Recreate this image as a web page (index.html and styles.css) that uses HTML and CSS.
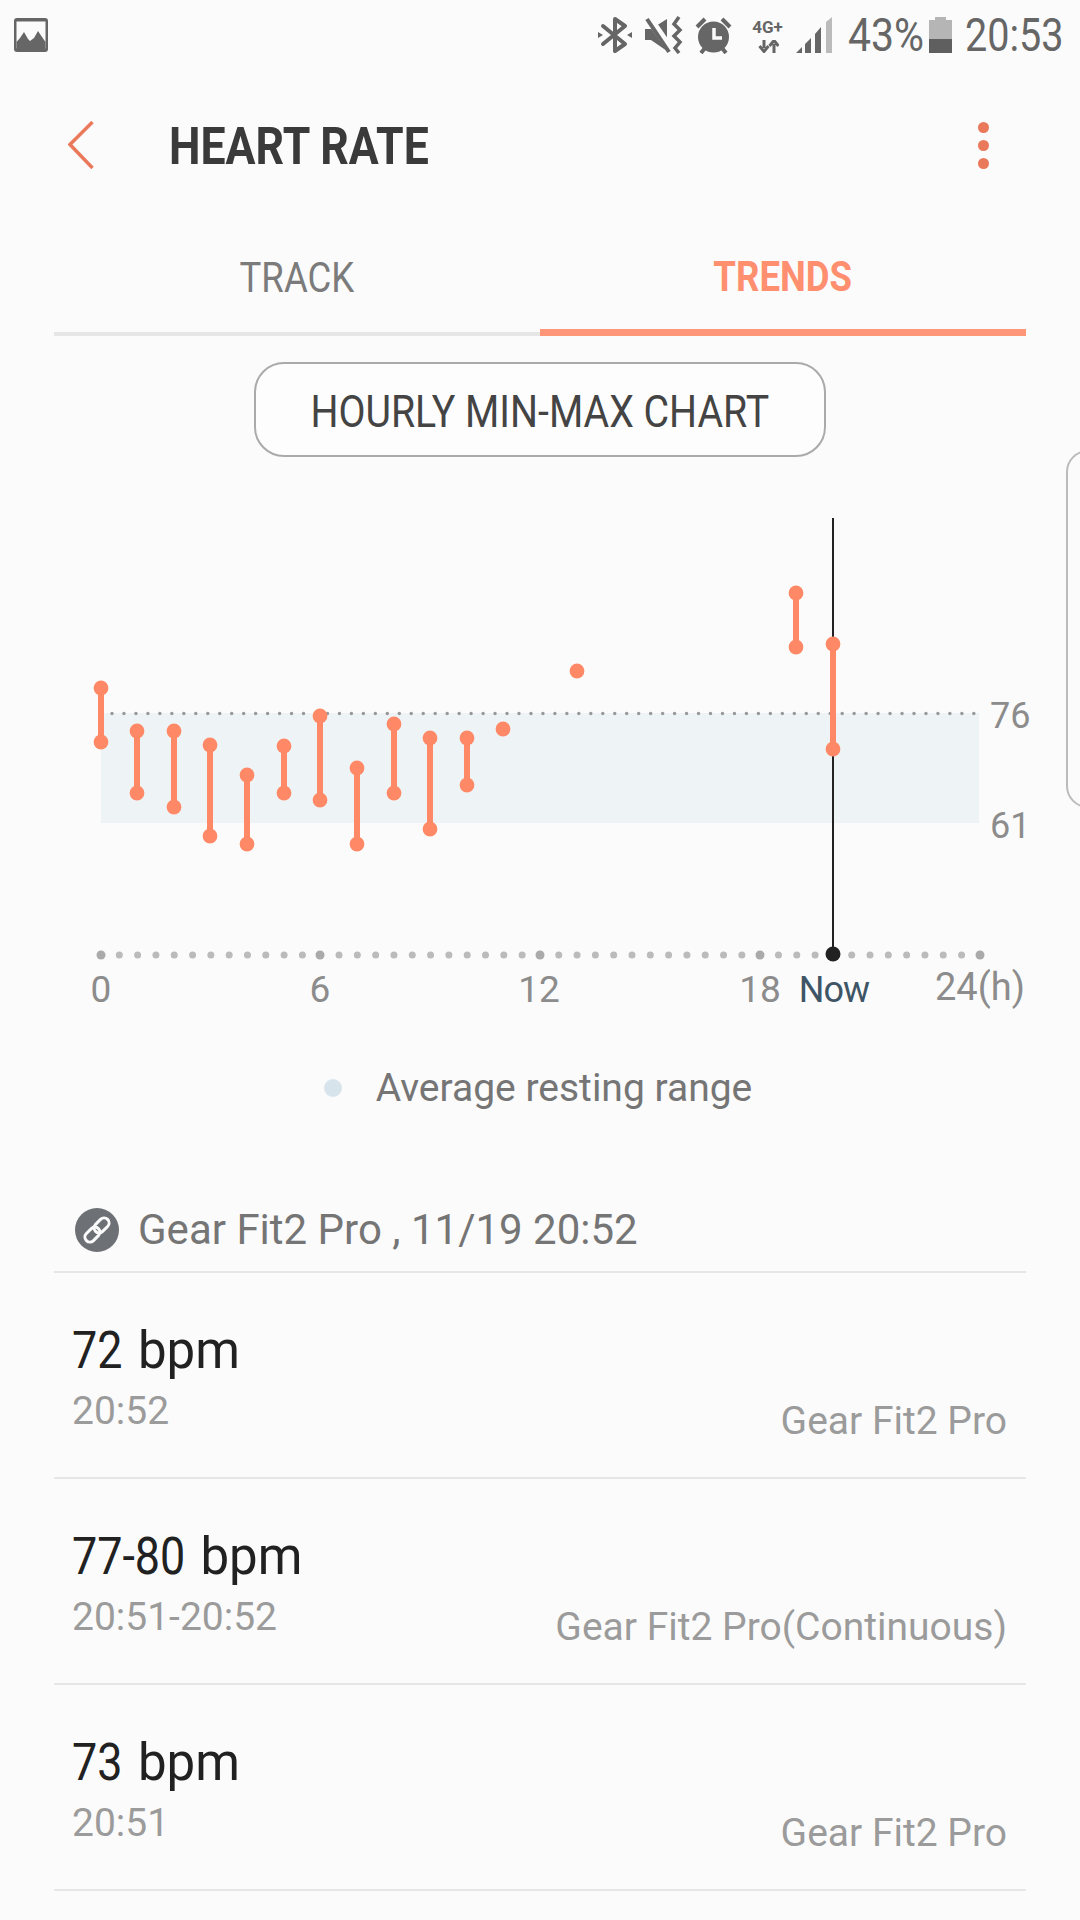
FILE: index.html
```html
<!DOCTYPE html>
<html lang="en">
<head>
    <meta charset="UTF-8">
    <title>Heart Rate</title>
    <link rel="stylesheet" href="styles.css">
</head>
<body>
    <!-- Status bar -->
    <div class="status">
        <svg class="ic-picture" width="34" height="34" viewBox="0 0 34 34">
            <rect x="0" y="0" width="34" height="34" rx="3" fill="#666"/>
            <rect x="2.5" y="3.5" width="29" height="27" fill="#fbfbfb"/>
            <path d="M2.5 24 L6 20 L10 14 L14 21 L16 23 L20 20 L24 13 L28 19 L31.5 24 V32 H2.5 Z" fill="#666"/>
        </svg>
        <div class="status-right">
            <svg class="ic-bt" width="34" height="38" viewBox="0 0 34 38">
                <path d="M5 10 L27 28 L17 35 V3 L27 10 L5 28" fill="none" stroke="#666" stroke-width="4" stroke-linejoin="round" stroke-linecap="round"/>
                <path d="M0 16 L5 19 L0 22 Z M34 16 L29 19 L34 22 Z" fill="#666"/>
            </svg>
            <svg class="ic-mute" width="38" height="38" viewBox="0 0 38 38">
                <path d="M0 13 H6 L22 3 V35 L6 24 H0 Z" fill="#666"/>
                <path d="M3 1 L26 34" stroke="#fbfbfb" stroke-width="8"/>
                <path d="M2 3 L24 36" stroke="#666" stroke-width="4"/>
                <path d="M34 1 L29 8 L35 14 L29 20 L35 26 L30 32 L34 37" fill="none" stroke="#666" stroke-width="3.5"/>
            </svg>
            <svg class="ic-alarm" width="37" height="37" viewBox="0 0 37 37">
                <circle cx="18.5" cy="20" r="15.5" fill="#666"/>
                <path d="M19 11 V21 H27" fill="none" stroke="#fbfbfb" stroke-width="3.5"/>
                <path d="M2 10 L10 2 M35 10 L27 2 M6 36 L10 31 M31 36 L27 31" stroke="#666" stroke-width="4"/>
            </svg>
            <div class="net">
                <span class="net-label">4G+</span>
                <svg width="22" height="13" viewBox="0 0 22 13">
                    <path d="M7 0 V8 M2.5 6 L7 11.5 L11.5 6 M17 13 V4 M12.5 6 L17 0.5 L21.5 6" fill="none" stroke="#666" stroke-width="3"/>
                </svg>
            </div>
            <svg class="ic-signal" width="36" height="36" viewBox="0 0 36 36">
                <path d="M0 36 L6 30 V36 Z M9 36 V27 L15 21 V36 Z M19 36 V17 L25 10 V36 Z" fill="#666"/>
                <path d="M30 36 V5 L36 0 V36 Z" fill="#bbb"/>
            </svg>
            <span class="status-text pct">43%</span>
            <div class="battery"><div class="battery-level"></div></div>
            <span class="status-text clock">20:53</span>
        </div>
    </div>

    <!-- App bar -->
    <div class="appbar">
        <svg class="back" width="26" height="48" viewBox="0 0 26 48">
            <path d="M24.5 1 L2 23.5 L24.5 47" fill="none" stroke="#e9795a" stroke-width="3.5"/>
        </svg>
        <h1 class="title">HEART RATE</h1>
        <div class="more"><i></i><i></i><i></i></div>
    </div>

    <!-- Tabs -->
    <div class="tabs">
        <div class="tab"><span>TRACK</span></div>
        <div class="tab tab-active"><span>TRENDS</span></div>
    </div>

    <button class="chart-type"><span>HOURLY MIN-MAX CHART</span></button>

    <!-- Chart -->
    <svg class="chart" width="1080" height="540" viewBox="0 500 1080 540">
        <rect class="range" x="101" y="713" width="878" height="110"/>
        <line class="range-top" x1="112" y1="713.5" x2="980" y2="713.5"/>

        <line class="axis-minor" x1="101" y1="955" x2="980" y2="955"/>
        <circle class="axis-major" cx="101" cy="955" r="4.5"/>
        <circle class="axis-major" cx="320" cy="955" r="4.5"/>
        <circle class="axis-major" cx="540" cy="955" r="4.5"/>
        <circle class="axis-major" cx="760" cy="955" r="4.5"/>
        <circle class="axis-major" cx="980" cy="955" r="4.5"/>

        <line class="now-line" x1="833" y1="518" x2="833" y2="954"/>
        <circle class="now-dot" cx="833" cy="954" r="7.5"/>

        <g class="bars">
            <line x1="101" y1="688" x2="101" y2="742"/><circle cx="101" cy="688" r="7.4"/><circle cx="101" cy="742" r="7.4"/>
            <line x1="137" y1="731" x2="137" y2="793"/><circle cx="137" cy="731" r="7.4"/><circle cx="137" cy="793" r="7.4"/>
            <line x1="174" y1="731" x2="174" y2="807"/><circle cx="174" cy="731" r="7.4"/><circle cx="174" cy="807" r="7.4"/>
            <line x1="210" y1="745" x2="210" y2="836"/><circle cx="210" cy="745" r="7.4"/><circle cx="210" cy="836" r="7.4"/>
            <line x1="247" y1="775" x2="247" y2="844"/><circle cx="247" cy="775" r="7.4"/><circle cx="247" cy="844" r="7.4"/>
            <line x1="284" y1="746" x2="284" y2="793"/><circle cx="284" cy="746" r="7.4"/><circle cx="284" cy="793" r="7.4"/>
            <line x1="320" y1="716" x2="320" y2="800"/><circle cx="320" cy="716" r="7.4"/><circle cx="320" cy="800" r="7.4"/>
            <line x1="357" y1="768" x2="357" y2="844"/><circle cx="357" cy="768" r="7.4"/><circle cx="357" cy="844" r="7.4"/>
            <line x1="394" y1="724" x2="394" y2="793"/><circle cx="394" cy="724" r="7.4"/><circle cx="394" cy="793" r="7.4"/>
            <line x1="430" y1="738" x2="430" y2="829"/><circle cx="430" cy="738" r="7.4"/><circle cx="430" cy="829" r="7.4"/>
            <line x1="467" y1="738" x2="467" y2="785"/><circle cx="467" cy="738" r="7.4"/><circle cx="467" cy="785" r="7.4"/>
            <circle cx="503" cy="729" r="7.4"/>
            <circle cx="577" cy="671" r="7.4"/>
            <line x1="796" y1="593" x2="796" y2="647"/><circle cx="796" cy="593" r="7.4"/><circle cx="796" cy="647" r="7.4"/>
            <line x1="833" y1="644" x2="833" y2="749"/><circle cx="833" cy="644" r="7.4"/><circle cx="833" cy="749" r="7.4"/>
        </g>

        <text class="label" x="990" y="728">76</text>
        <text class="label" x="990" y="838">61</text>
        <text class="label tick mid" x="101" y="1002">0</text>
        <text class="label tick mid" x="320" y="1002">6</text>
        <text class="label tick mid" x="539" y="1002">12</text>
        <text class="label tick mid" x="760" y="1002">18</text>
        <text class="label now mid" x="834" y="1002">Now</text>
        <text class="label hours" x="935" y="1000">24(h)</text>
    </svg>

    <div class="legend">
        <span class="legend-dot"></span>
        <span class="legend-text">Average resting range</span>
    </div>

    <!-- Readings -->
    <div class="source">
        <svg class="ic-link" width="44" height="44" viewBox="0 0 44 44">
            <circle cx="22" cy="22" r="22" fill="#6d7074"/>
            <g fill="none" stroke="#fbfbfb" stroke-width="3" transform="rotate(-45 22 22)">
                <rect x="7" y="17" width="17" height="10" rx="5"/>
                <rect x="20" y="17" width="17" height="10" rx="5"/>
            </g>
        </svg>
        <span class="source-text">Gear Fit2 Pro , 11/19 20:52</span>
    </div>

    <div class="row">
        <div>
            <div class="row-value"><span class="num">72</span> bpm</div>
            <div class="row-time">20:52</div>
        </div>
        <div class="row-device">Gear Fit2 Pro</div>
    </div>
    <div class="row">
        <div>
            <div class="row-value"><span class="num num-range">77-80</span> bpm</div>
            <div class="row-time">20:51-20:52</div>
        </div>
        <div class="row-device">Gear Fit2 Pro(Continuous)</div>
    </div>
    <div class="row">
        <div>
            <div class="row-value"><span class="num">73</span> bpm</div>
            <div class="row-time">20:51</div>
        </div>
        <div class="row-device">Gear Fit2 Pro</div>
    </div>

    <!-- Edge panel handle -->
    <div class="edge-handle"></div>
</body>
</html>
```

FILE: styles.css
```css
/* General */
html, body {
    margin: 0;
    height: 1920px;
    overflow: hidden;
}

body {
    position: relative;
    font-family: Roboto, "Noto Sans", sans-serif;
    background-color: #fbfbfb;
    color: #333;
}

/* Status bar */
.status {
    display: flex;
    justify-content: space-between;
    align-items: center;
    height: 70px;
    padding: 0 18px 0 14px;
}

.status-right {
    display: flex;
    align-items: center;
    color: #666;
}

.ic-bt { margin-right: 13px; }
.ic-mute { margin-right: 12px; }
.ic-alarm { margin-right: 17px; }
.ic-signal { margin-left: 10px; }

.net {
    display: flex;
    flex-direction: column;
    align-items: center;
    width: 37px;
}

.net-label {
    font-size: 17px;
    font-weight: 700;
    line-height: 20px;
    margin-bottom: 3px;
}

.status-text {
    font-size: 46px;
    line-height: 50px;
    transform: scaleX(.89);
    transform-origin: left center;
    white-space: nowrap;
}

.pct {
    width: 71px;
    margin-left: 16px;
}

.clock {
    width: 97px;
    margin-left: 13px;
    transform: scaleX(.86);
}

.battery {
    position: relative;
    display: flex;
    align-items: flex-end;
    width: 23px;
    height: 33px;
    margin-left: 10px;
    margin-top: 3px;
    background-color: #b5b5b5;
}

.battery::before {
    content: "";
    position: absolute;
    top: -3px;
    left: 6px;
    width: 11px;
    height: 3px;
    background-color: #b5b5b5;
}

.battery-level {
    width: 100%;
    height: 14px;
    background-color: #5f5f5f;
}

/* App bar */
.appbar {
    display: flex;
    align-items: center;
    height: 150px;
    padding: 0 91px 0 68px;
}

.title {
    flex: 1;
    margin: 2px 0 0 75px;
    font-size: 52px;
    font-weight: 700;
    color: #3a3a3a;
    transform: scaleX(.857);
    transform-origin: left center;
}

.more i {
    display: block;
    width: 11px;
    height: 11px;
    margin: 7px 0;
    border-radius: 50%;
    background-color: #e9795a;
}

/* Tabs */
.tabs {
    display: flex;
    margin: 0 54px;
}

.tab {
    flex: 1;
    height: 116px;
    box-sizing: border-box;
    padding-top: 3px;
    display: flex;
    align-items: center;
    justify-content: center;
    font-size: 42px;
    color: #7b7b7b;
    border-bottom: 4px solid #e6e6e6;
}

.tab span {
    transform: scaleX(.87);
}

.tab-active {
    font-weight: 700;
    color: #ff8f6f;
    border-bottom: 7px solid #ff9677;
}

/* Chart type button */
.chart-type {
    display: block;
    width: 572px;
    height: 95px;
    margin: 26px auto 0;
    padding: 3px 0 0;
    border: 2px solid #aaa;
    border-radius: 30px;
    background-color: #fdfdfd;
    font-family: Roboto, sans-serif;
    font-size: 45px;
    color: #444;
}

.chart-type span {
    display: inline-block;
    white-space: nowrap;
    transform: scaleX(.873);
}

/* Chart */
.chart {
    display: block;
    margin-top: 43px;
}

.range { fill: #eef3f6; }

.range-top {
    stroke: #999;
    stroke-width: 3.5;
    stroke-linecap: round;
    stroke-dasharray: 0 11.97;
}

.axis-minor {
    stroke: #bbb;
    stroke-width: 7;
    stroke-linecap: round;
    stroke-dasharray: 0 18.31;
}

.axis-major { fill: #aaa; }

.now-line {
    stroke: #222;
    stroke-width: 2;
}

.now-dot { fill: #222; }

.bars line {
    stroke: #ff8966;
    stroke-width: 6;
}

.bars circle { fill: #ff8966; }

.label {
    font-size: 36px;
    fill: #8c8c8c;
}

.tick { font-size: 37px; }
.hours { font-size: 38px; }

.mid { text-anchor: middle; }

.now {
    font-size: 36px;
    letter-spacing: -1px;
    fill: #3e5566;
}

/* Legend */
.legend {
    display: flex;
    align-items: center;
    justify-content: center;
    height: 96px;
    padding-right: 4px;
}

.legend-dot {
    width: 18px;
    height: 18px;
    margin-right: 34px;
    border-radius: 50%;
    background-color: #d8e4ec;
}

.legend-text {
    font-size: 39px;
    color: #757575;
}

/* Readings */
.source {
    display: flex;
    align-items: center;
    height: 137px;
    margin: 0 54px;
    padding: 0 0 0 21px;
    box-sizing: border-box;
    border-bottom: 2px solid #e6e6e6;
}

.ic-link { margin-right: 19px; margin-top: 52px; }

.source-text {
    margin-top: 52px;
    font-size: 42px;
    color: #757575;
}

.row {
    display: flex;
    justify-content: space-between;
    align-items: flex-start;
    height: 206px;
    margin: 0 54px;
    padding: 48px 19px 0 18px;
    box-sizing: border-box;
    border-bottom: 2px solid #e6e6e6;
}

.row-value {
    font-size: 51px;
    line-height: 60px;
    color: #212121;
}

.num {
    display: inline-block;
    margin-right: -4px;
    transform: scaleX(.88);
    transform-origin: left center;
}

.num-range { margin-right: -13px; }

.row-time {
    margin-top: 8px;
    font-size: 39px;
    line-height: 44px;
    color: #9b9b9b;
}

.row-device {
    margin-top: 78px;
    font-size: 39px;
    line-height: 44px;
    color: #9b9b9b;
}

/* Edge panel handle */
.edge-handle {
    position: absolute;
    top: 450px;
    left: 1066px;
    width: 40px;
    height: 354px;
    border: 2px solid #bbb;
    border-radius: 26px;
}
```
